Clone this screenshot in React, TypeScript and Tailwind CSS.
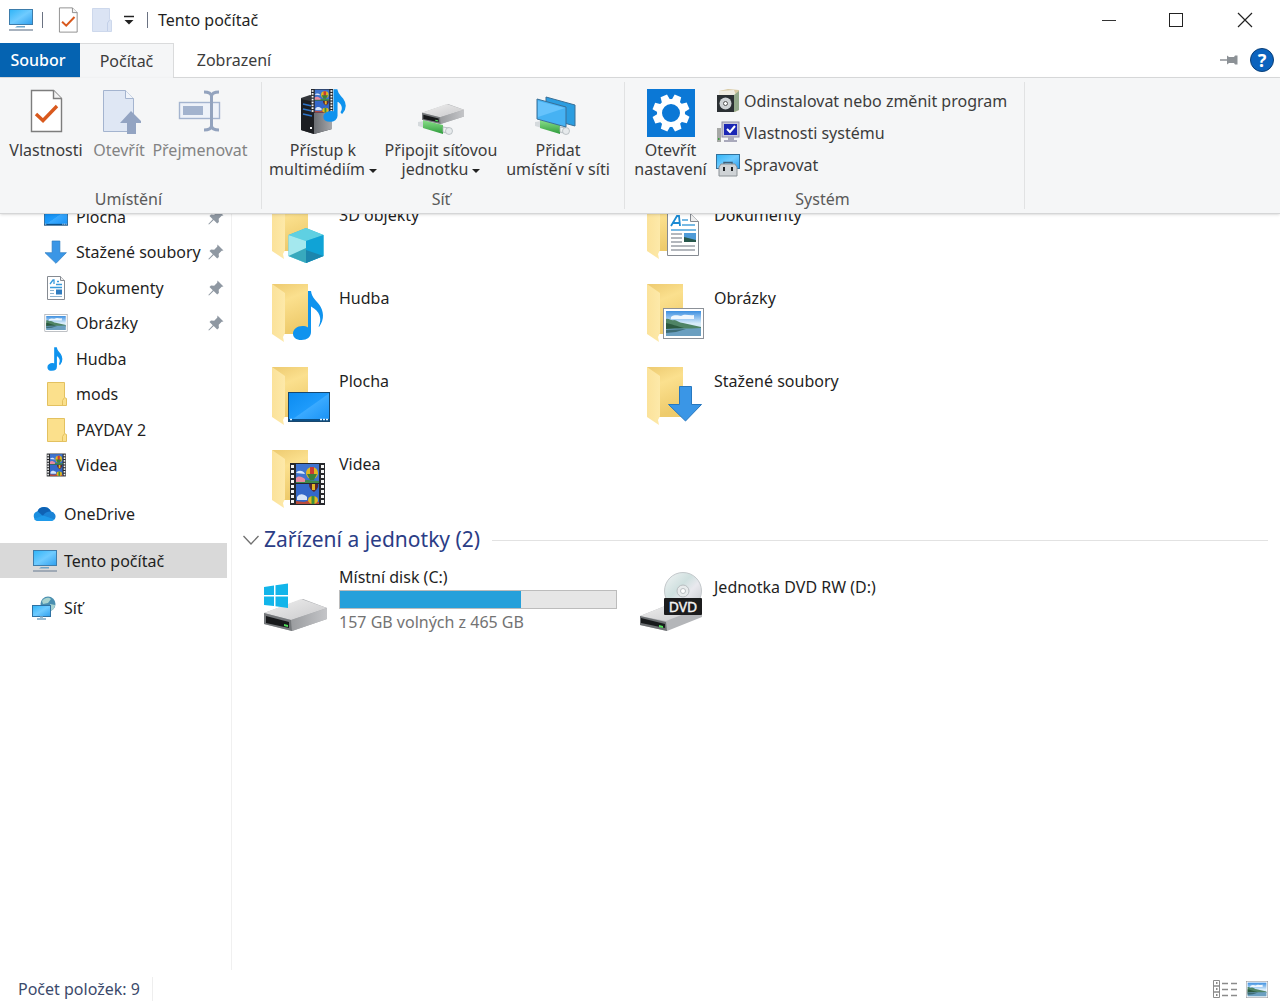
import type { ReactNode } from 'react';

type NavItem = {
  label: string;
  icon: ReactNode;
  pinned?: boolean;
};

type FolderItem = {
  label: string;
  overlay: ReactNode;
};

/* ---------- shared drawings ---------- */

function Gradients() {
  return (
    <svg className="absolute h-0 w-0" aria-hidden="true">
      <defs>
        <linearGradient id="screen" x1="0" y1="0" x2="1" y2="1">
          <stop offset="0" stopColor="#2fb4f7" />
          <stop offset="0.5" stopColor="#6fcbff" />
          <stop offset="1" stopColor="#2f9fee" />
        </linearGradient>
        <linearGradient id="desk" x1="0" y1="0" x2="1" y2="1">
          <stop offset="0" stopColor="#0b8bf0" />
          <stop offset="0.5" stopColor="#1e9bfb" />
          <stop offset="0.52" stopColor="#3aaaff" />
          <stop offset="1" stopColor="#1690f5" />
        </linearGradient>
        <linearGradient id="folderBack" x1="0" y1="0" x2="0.3" y2="1">
          <stop offset="0" stopColor="#edca70" />
          <stop offset="0.4" stopColor="#fbe08e" />
          <stop offset="1" stopColor="#eecb6c" />
        </linearGradient>
        <linearGradient id="folderFlap" x1="0" y1="0" x2="1" y2="0">
          <stop offset="0" stopColor="#fbe29a" />
          <stop offset="1" stopColor="#fde9a9" />
        </linearGradient>
        <linearGradient id="driveTop" x1="0" y1="0" x2="1" y2="1">
          <stop offset="0" stopColor="#efefef" />
          <stop offset="1" stopColor="#c9c9cb" />
        </linearGradient>
        <linearGradient id="driveSide" x1="0" y1="0" x2="1" y2="0">
          <stop offset="0" stopColor="#9a9c9f" />
          <stop offset="1" stopColor="#c4c5c8" />
        </linearGradient>
        <linearGradient id="sky" x1="0" y1="0" x2="0" y2="1">
          <stop offset="0" stopColor="#3d8fe0" />
          <stop offset="0.5" stopColor="#d8ecfa" />
          <stop offset="1" stopColor="#cfe3f0" />
        </linearGradient>
        <linearGradient id="disc" x1="0" y1="0" x2="1" y2="1">
          <stop offset="0" stopColor="#f3f4f5" />
          <stop offset="0.4" stopColor="#cfe0df" />
          <stop offset="0.6" stopColor="#e9e9ee" />
          <stop offset="1" stopColor="#c3c6ca" />
        </linearGradient>
        <linearGradient id="tower" x1="0" y1="0" x2="1" y2="0">
          <stop offset="0" stopColor="#6a6d72" />
          <stop offset="1" stopColor="#a5a7ab" />
        </linearGradient>
        <linearGradient id="cable" x1="0" y1="0" x2="0" y2="1">
          <stop offset="0" stopColor="#8be08b" />
          <stop offset="1" stopColor="#2f9c3c" />
        </linearGradient>
      </defs>
    </svg>
  );
}

function MonitorIcon() {
  return (
    <svg width="26" height="24" viewBox="0 0 26 24">
      <rect x="1.500" y="1.500" width="23" height="15" fill="url(#screen)" stroke="#3d7cab" />
      <path d="M9 18h8v1.500H7z" fill="#6fa4c8" />
      <path d="M1 22h24" stroke="#8b98a8" strokeWidth="1.500" />
    </svg>
  );
}

function PropertiesIcon({ size }: { size: number }) {
  return (
    <svg width={size} height={size} viewBox="0 0 44 44">
      <path d="M7.500 1.500h22l8 8v33h-30z" fill="#fff" stroke="#7d7d7d" strokeWidth="1.400" />
      <path d="M29.500 1.500v8h8" fill="#f3f3f3" stroke="#7d7d7d" strokeWidth="1.400" />
      <path d="M12 25l7 6.500L33 17" fill="none" stroke="#d9591d" strokeWidth="3.400" />
    </svg>
  );
}

function OpenIcon() {
  return (
    <svg width="44" height="46" viewBox="0 0 44 46">
      <path d="M6.500 1.500h22l8 8v33h-30z" fill="#dfe7f4" stroke="#a4b4cf" />
      <path d="M28.500 1.500v8h8" fill="#f0f4fa" stroke="#a4b4cf" />
      <path d="M34 22l12 12h-7v11h-9V34h-7z" fill="#93a4c2" />
    </svg>
  );
}

function RenameIcon() {
  return (
    <svg width="44" height="44" viewBox="0 0 44 44">
      <rect x="1.500" y="13.500" width="40" height="16" fill="#eef2f9" stroke="#a4b4cf" strokeWidth="1.400" />
      <rect x="5" y="17" width="20" height="9" fill="#a3b3ce" />
      <path
        d="M26 3c5 0 7 1 7.500 4C34 4 36 3 41 3M33.500 6v32M26 41c5 0 7-1 7.500-4 .5 3 2.500 4 7.500 4"
        fill="none"
        stroke="#93a3be"
        strokeWidth="3"
      />
    </svg>
  );
}

function NoteShape({ stroke = 0 }: { stroke?: number }) {
  return (
    <path
      d="M44 10h3c1 7 5 9 8.500 14 4 6 5.500 14-.5 22-.5-.5-.5-1 0-1.500 3-7 1-14-8-19V51c0 5-4 8-9.500 8S29 56.500 29 52.500 33 45 38.500 45c2 0 4 .4 5.500 1.500z"
      fill="#0f93ee"
      stroke="#0f93ee"
      strokeWidth={stroke}
    />
  );
}

function FilmShape() {
  const holes = [18, 23, 28, 33, 38, 43, 48, 53];
  return (
    <g>
      <rect x="26" y="16" width="35" height="42" fill="#26282c" />
      {holes.map((y) => (
        <g key={y} fill="#f4f4f4">
          <rect x="27" y={y} width="3" height="3" />
          <rect x="57" y={y} width="3" height="3" />
        </g>
      ))}
      <rect x="32" y="17" width="23" height="19" fill="#3f74cf" />
      <rect x="32" y="37" width="23" height="20" fill="#3468c9" />
      <path d="M32 36v-3l6 1 5-1 12 1v2z" fill="#3f8a4d" />
      <path d="M32 31c3-3 6-1 9 1v3h-9z" fill="#e88aa0" />
      <path d="M32 26c2-3 7-3 9 1z" fill="#d8e7fa" />
      <ellipse cx="48" cy="26" rx="6" ry="6" fill="#e2b81f" />
      <path d="M46 20h4v12h-4z" fill="#c93a35" />
      <path d="M43 27h10l-3 6h-4z" fill="#3b7f3b" />
      <path d="M45 37h9c1 4-2 6-4 8-3-2-5-4-5-8z" fill="#5d2830" />
      <path d="M48 37h3v6h-3z" fill="#e4b724" />
      <path d="M33 50c3-4 7-3 10 0v3H33z" fill="#d5e4f8" />
      <path d="M32 57v-3l8 1 6-2 9 2v2z" fill="#b84b3b" />
      <ellipse cx="49" cy="53" rx="5" ry="4" fill="#e2b81f" />
      <path d="M47.500 49h3v8h-3z" fill="#3b8f3b" />
    </g>
  );
}

function PictureShape() {
  return (
    <g>
      <rect x="24.500" y="27.500" width="40" height="30" fill="#fff" stroke="#8c9198" />
      <rect x="27" y="30" width="35" height="25" fill="url(#sky)" />
      <path d="M32 36c4-3 8-1 10-1 4-3 8 0 13-1v4H32z" fill="#f0f7fd" />
      <path d="M27 38c3-1 5 2 8 1 3 0 5 3 9 3l18 4v3H27z" fill="#4f8465" />
      <path d="M27 42c6 1 10 3 18 5l-18 3z" fill="#2c5a40" />
      <path d="M27 48c12-1 22 0 35-1v8H27z" fill="#6b9fc0" />
      <path d="M27 49l20-1-10 3-10 1z" fill="#3d6c76" />
    </g>
  );
}

function DocumentShape() {
  return (
    <g>
      <path d="M28.500 15.500h23l8 8v34h-31z" fill="#fff" stroke="#868b92" />
      <path d="M51.500 15.500v8h8" fill="#eee" stroke="#868b92" />
      <path d="M32 28l6-10h2l1 10M34 25h7" fill="none" stroke="#1b8ad3" strokeWidth="1.800" />
      <path d="M43 22h6M43 27h13M32 32h25" stroke="#4aa3dc" strokeWidth="1.400" />
      <path d="M32 36h11M32 40h11M32 44h11M32 48h24M32 52h24" stroke="#9aa0a8" strokeWidth="1.300" />
      <rect x="45" y="35" width="12" height="9" fill="#4e9bd8" />
      <path d="M45 39l12 3v2H45z" fill="#28584c" />
    </g>
  );
}

function SmallDocumentIcon() {
  return (
    <svg width="24" height="24" viewBox="0 0 24 24">
      <path d="M3.500 .5h13l4 4v19h-17z" fill="#fff" stroke="#868b92" />
      <path d="M16.500 .5v4h4" fill="#eee" stroke="#868b92" />
      <path d="M6 8l3-4h1v4M13 5.500h2M12 8.500h6M6 11.500h12" fill="none" stroke="#3a9bdc" strokeWidth="1.300" />
      <path d="M6 14.500h4M6 17.500h4M6 20.500h12" stroke="#8fb4cf" />
      <rect x="12" y="13.500" width="6" height="5" fill="#2f7cc0" />
    </svg>
  );
}

function DesktopShape() {
  return (
    <g>
      <rect x="24.500" y="28.500" width="41" height="29" fill="url(#desk)" stroke="#17476e" />
      <path d="M25 56h40" stroke="#0b4f86" strokeWidth="2" />
      <path d="M26 55.500h2M56 55.500h2M59 55.500h2M62 55.500h2" stroke="#e8f5ff" strokeWidth="1.500" />
    </g>
  );
}

function DownloadShape() {
  return <path d="M40.500 22.500h12v18h10L46.500 57 29.500 40.500h11z" fill="#3a96e6" stroke="#2778c0" />;
}

function CubeShape() {
  return (
    <g>
      <path d="M42 30l17.500 7v21L42 65l-17.500-7V37z" fill="#37bfd9" />
      <path d="M42 30l17.500 7L42 43l-17.500-6z" fill="#5fd0e2" />
      <path d="M24.500 37L42 43v22l-17.500-7z" fill="#a4e8ee" />
      <path d="M24.500 58L42 50v15z" fill="#38a9bd" />
      <path d="M42 43l17.500-6v21L42 65z" fill="#10a3d6" />
      <path d="M42 65V52l17.500 6z" fill="#1c86ad" />
    </g>
  );
}

function FolderIcon({ children }: { children: ReactNode }) {
  return (
    <svg className="shrink-0 overflow-visible" width="64" height="64" viewBox="0 0 64 64">
      <path d="M8 3h36v50H18z" fill="url(#folderBack)" />
      <path d="M8 3l13 9v40l-2 4 1 5-12-8z" fill="url(#folderFlap)" />
      <path d="M21 53h5v7l-5-2z" fill="#fff" />
      {children}
    </svg>
  );
}

// Small icon cropped from the large overlay drawing
function Mini({ box, children }: { box: string; children: ReactNode }) {
  return (
    <svg width="24" height="24" viewBox={box}>
      {children}
    </svg>
  );
}

function SmallFolderIcon() {
  return (
    <svg width="24" height="24" viewBox="0 0 24 24">
      <path d="M3.500 .5h17v15l2 1v7h-19z" fill="#fbe08c" stroke="#e3c160" />
      <path d="M18.500 23.500v-5l2-3" fill="none" stroke="#e3c160" />
    </svg>
  );
}

function OneDriveIcon() {
  return (
    <svg width="24" height="24" viewBox="0 0 24 24">
      <path d="M6 19a5 5 0 0 1-.5-9.800A7.500 7.500 0 0 1 19 9.500a5 5 0 0 1 .5 9.500z" fill="#1a8fe0" />
      <path d="M5.500 9.200A7.500 7.500 0 0 1 19 9.500L11 14z" fill="#0f62b4" />
      <path d="M19 9.500a5 5 0 0 1 3.500 8L11 13.500c2-3 5-4.500 8-4z" fill="#1b83d6" />
      <path d="M2 17l9-3.500L22.500 17.500A5 5 0 0 1 19.500 19H6a5 5 0 0 1-4-2z" fill="#1f9aea" />
    </svg>
  );
}

function NetworkIcon() {
  return (
    <svg width="24" height="24" viewBox="0 0 24 24">
      <circle cx="16" cy="8" r="7.500" fill="#4a8fb0" />
      <path d="M10 5c3-4 7-4 9-2l-3 4-5 1zM18 8l5 1c0 3-2 5-4 6z" fill="#a9d3cf" />
      <rect x=".5" y="9.500" width="18" height="11" fill="url(#screen)" stroke="#2f72a3" />
      <path d="M5 23h9M8 21h3" stroke="#7aa6c4" strokeWidth="1.500" />
    </svg>
  );
}

function PinIcon() {
  return (
    <svg className="shrink-0" width="16" height="16" viewBox="0 0 16 16">
      <path d="M9.500 .5l6 6-1.800.3-3 3 .2 3.200-1.700 1.500-3.500-3.500L1 15.500.3 15l4.500-4.800L1.500 7l1.500-1.500 3.200.2 3-3z" fill="#8f98a2" />
    </svg>
  );
}

function DriveShape() {
  return (
    <g>
      <path d="M0 45L39 31l24 9v11L28 63 0 56z" fill="#a9abae" />
      <path d="M0 45L37 31l26 9-36 12z" fill="url(#driveTop)" />
      <path d="M27 52l36-12v11L28 63z" fill="url(#driveSide)" />
      <path d="M0 45l27 7 1 11-28-7z" fill="#75787b" />
      <path d="M2 48l23 6v6L2 55z" fill="#17191b" />
      <path d="M20 56l4 1v2l-4-1z" fill="#4fe05a" />
    </g>
  );
}

function LocalDiskIcon() {
  return (
    <svg className="shrink-0 overflow-visible" width="64" height="64" viewBox="0 0 64 64">
      <DriveShape />
      <path d="M0 19l10-1.500V27H0zM11.500 17.300L24 15.500V27H11.500zM0 28.500h10V38L0 37zM11.500 28.500H24V40l-12.500-1.800z" fill="#12b5ea" />
    </svg>
  );
}

function DvdIcon() {
  return (
    <svg className="shrink-0 overflow-visible" width="64" height="64" viewBox="0 0 64 64">
      <path d="M1 48l30-12 32 6v7L28 63 1 57z" fill="#b4b6b9" />
      <path d="M1 48l30-12 32 3-36 14z" fill="url(#driveTop)" />
      <path d="M1 48l26 6 1 9-27-6z" fill="#6c6f72" />
      <path d="M2 50l24 6v4L2 55z" fill="#17191b" />
      <path d="M20 57l4 1v2l-4-1z" fill="#4fe05a" />
      <circle cx="44" cy="23" r="18.500" fill="url(#disc)" stroke="#c3c8cb" />
      <circle cx="44" cy="23" r="6" fill="#e8ebec" stroke="#b8bdc0" />
      <circle cx="44" cy="23" r="2.500" fill="#fff" stroke="#b8bdc0" />
      <rect x="25" y="30" width="38" height="17" rx="1" fill="#1c1c1d" />
      <text x="44" y="44" textAnchor="middle" fontSize="14" fill="#f4f4f4" stroke="#f4f4f4" strokeWidth=".4">
        DVD
      </text>
    </svg>
  );
}

function MediaIcon() {
  return (
    <svg width="46" height="46" viewBox="0 0 46 46">
      <path d="M1 9l9-3 22 5v29l-18 5-13-4z" fill="#33363b" />
      <path d="M14 13l18-4v31l-18 5z" fill="url(#tower)" />
      <path d="M1 10l13 3v32L1 41z" fill="#1c1e22" />
      <path d="M3 15l9 2M3 20l9 2M3 25l9 2" stroke="#2f74c8" strokeWidth="1.500" />
      <path d="M10 38h2v2h-2z" fill="#fff" />
      <svg x="11" y="0" width="22" height="24" viewBox="26 16 35 42" preserveAspectRatio="none">
        <FilmShape />
      </svg>
      <svg x="23" y="0" width="23" height="33" viewBox="27 8 34 53" preserveAspectRatio="none">
        <NoteShape stroke={3} />
      </svg>
    </svg>
  );
}

function Cable() {
  return (
    <g>
      <path d="M0 33l6-1 28 8-1 5-8-1L0 37z" fill="#d5dadd" />
      <path d="M5 31l20 5v9L5 39z" fill="url(#cable)" />
      <path d="M25 38l6 1v5l-6-1z" fill="#eef1f2" stroke="#aab2b6" strokeWidth=".7" />
      <circle cx="31" cy="42" r="3.500" fill="#e6eaec" stroke="#aab2b6" strokeWidth=".7" />
    </g>
  );
}

function MapDriveIcon() {
  return (
    <svg width="46" height="46" viewBox="0 0 46 46">
      <Cable />
      <svg x="4" y="15" width="42" height="20" viewBox="0 31 63 32" preserveAspectRatio="none">
        <DriveShape />
      </svg>
    </svg>
  );
}

function AddPlaceIcon() {
  return (
    <svg width="46" height="46" viewBox="0 0 46 46">
      <path d="M11 8l29 8v21l-29-8z" fill="#2b9de0" stroke="#3a6f96" />
      <Cable />
      <path d="M2 10l29 8v20L2 30z" fill="#46b2f3" stroke="#3a6f96" />
      <path d="M3 12l27 7-27 9z" fill="#66c3fc" />
    </svg>
  );
}

function SettingsIcon() {
  const teeth = [22, 67, 112, 157, 202, 247, 292, 337];
  return (
    <svg width="48" height="48" viewBox="0 0 48 48">
      <rect width="48" height="48" fill="#0b78d6" />
      {teeth.map((angle) => (
        <path key={angle} d="M20.500 5.500h7l1 7h-9z" fill="#fff" transform={`rotate(${angle} 24 24)`} />
      ))}
      <circle cx="24" cy="24" r="11.500" fill="none" stroke="#fff" strokeWidth="5" />
    </svg>
  );
}

function UninstallIcon() {
  return (
    <svg width="24" height="24" viewBox="0 0 24 24">
      <path d="M3 2l9-2 11 1v20l-4 2H3z" fill="#d8c9a2" />
      <path d="M3 2l15-1 2 5H3z" fill="#eeebe0" />
      <path d="M18 6l5-4v19l-5 2z" fill="#93a98b" />
      <rect x="1" y="6" width="17" height="17" fill="#2b3033" />
      <circle cx="9.500" cy="14.500" r="6" fill="#cfd3d5" />
      <circle cx="9.500" cy="14.500" r="2" fill="#fff" stroke="#555" />
    </svg>
  );
}

function SystemIcon() {
  return (
    <svg width="24" height="24" viewBox="0 0 24 24">
      <rect x="1" y="7" width="4" height="14" fill="#a6a8a6" />
      <path d="M2 18h1.500" stroke="#3f9c42" strokeWidth="2" />
      <rect x="6" y="1" width="17" height="15" fill="#c9c8d8" stroke="#8c8ca4" />
      <rect x="8" y="3" width="13" height="11" fill="#1a26b5" />
      <path d="M11 8l3 3 5-6" fill="none" stroke="#fff" strokeWidth="2" />
      <path d="M12 16h6v3h3v2H8v-2h4z" fill="#a9a9bb" />
    </svg>
  );
}

function ManageIcon() {
  return (
    <svg width="24" height="24" viewBox="0 0 24 24">
      <rect x=".5" y="1.500" width="23" height="14" fill="url(#screen)" stroke="#33719c" />
      <path d="M8 12V9.500h8V12" fill="none" stroke="#3d5f7a" strokeWidth="1.500" />
      <path d="M3 14l2-3h14l2 3v9H3z" fill="#cfd3d6" stroke="#8b9196" />
      <path d="M7 14h2v4H7zM15 14h2v4h-2z" fill="#202326" />
    </svg>
  );
}

function Caret() {
  return (
    <svg className="ml-1 inline-block align-middle" width="8" height="4" viewBox="0 0 8 4">
      <path d="M0 0h8L4 4z" fill="#222" />
    </svg>
  );
}

/* ---------- data ---------- */

const quickAccess: NavItem[] = [
  { label: 'Plocha', icon: <Mini box="24 22 42 42"><DesktopShape /></Mini>, pinned: true },
  { label: 'Stažené soubory', icon: <Mini box="28 21 37 37"><DownloadShape /></Mini>, pinned: true },
  { label: 'Dokumenty', icon: <SmallDocumentIcon />, pinned: true },
  { label: 'Obrázky', icon: <Mini box="23 21 43 43"><PictureShape /></Mini>, pinned: true },
  { label: 'Hudba', icon: <Mini box="20 8 53 53"><NoteShape stroke={3} /></Mini> },
  { label: 'mods', icon: <SmallFolderIcon /> },
  { label: 'PAYDAY 2', icon: <SmallFolderIcon /> },
  { label: 'Videa', icon: <Mini box="21 15 44 44"><FilmShape /></Mini> },
];

const places: NavItem[] = [
  { label: 'OneDrive', icon: <OneDriveIcon /> },
  { label: 'Tento počítač', icon: <MonitorIcon /> },
  { label: 'Síť', icon: <NetworkIcon /> },
];

const folders: FolderItem[] = [
  { label: '3D objekty', overlay: <CubeShape /> },
  { label: 'Dokumenty', overlay: <DocumentShape /> },
  { label: 'Hudba', overlay: <NoteShape /> },
  { label: 'Obrázky', overlay: <PictureShape /> },
  { label: 'Plocha', overlay: <DesktopShape /> },
  { label: 'Stažené soubory', overlay: <DownloadShape /> },
  { label: 'Videa', overlay: <FilmShape /> },
];

const disk = { total: 465, free: 157, used: 65.6 };

/* ---------- page parts ---------- */

function TitleBar() {
  return (
    <header className="flex h-[43px] items-center justify-between pb-1">
      <div className="flex items-center pl-2">
        <MonitorIcon />
        <span className="ml-2 h-4 w-px bg-gray-500" />
        <button className="ml-3" aria-label="Vlastnosti">
          <PropertiesIcon size={26} />
        </button>
        <button className="ml-2.5" aria-label="Nová složka">
          <svg width="22" height="24" viewBox="0 0 22 24">
            <path d="M1.500 .5h17v11l2 1v11h-19z" fill="#dbe4f4" stroke="#cdd8ec" />
            <path d="M16.500 23v-8l2-3" fill="none" stroke="#c3d0e8" />
          </svg>
        </button>
        <button className="ml-2.5" aria-label="Přizpůsobit panel">
          <svg width="12" height="10" viewBox="0 0 12 10">
            <path d="M1 1.500h10" stroke="#222" strokeWidth="1.500" />
            <path d="M1.500 5h9L6 9.500z" fill="#222" />
          </svg>
        </button>
        <span className="ml-3 h-4 w-px bg-gray-500" />
        <h1 className="ml-2.5">Tento počítač</h1>
      </div>
      <div className="flex">
        <button className="flex h-10 w-[67px] items-center justify-center" aria-label="Minimalizovat">
          <svg width="16" height="16" viewBox="0 0 16 16">
            <path d="M1 8.500h14" stroke="#333" />
          </svg>
        </button>
        <button className="flex h-10 w-[67px] items-center justify-center" aria-label="Maximalizovat">
          <svg width="16" height="16" viewBox="0 0 16 16">
            <rect x="1.500" y="1.500" width="13" height="13" fill="none" stroke="#222" />
          </svg>
        </button>
        <button className="flex h-10 w-[71px] items-center justify-center" aria-label="Zavřít">
          <svg width="16" height="16" viewBox="0 0 16 16">
            <path d="M1 1l14 14M15 1L1 15" stroke="#222" strokeWidth="1.200" />
          </svg>
        </button>
      </div>
    </header>
  );
}

function Tabs() {
  return (
    <div className="flex h-[35px] items-stretch border-b border-[#dadbdc] text-[#3c3c3c]">
      <button className="w-20 bg-[#0563b1] pr-1 font-medium text-white">Soubor</button>
      <button className="-mb-px w-[94px] border-t border-r border-[#dadbdc] bg-[#f5f6f7]">Počítač</button>
      <button className="w-[120px]">Zobrazení</button>
      <div className="ml-auto flex items-center gap-3 pr-1.5">
        <button aria-label="Připnout pás karet">
          <svg width="18" height="12" viewBox="0 0 18 12">
            <path d="M0 6h7" stroke="#8c9196" strokeWidth="1.500" />
            <path d="M7 1.500l2 1.500h5l1-1.500h2.500v9H15L14 9H9l-2 1.500z" fill="#8c9196" />
          </svg>
        </button>
        <button
          className="flex size-6 items-center justify-center rounded-full border border-[#0a3f77] bg-[#0b63be] text-lg leading-none font-bold text-white"
          aria-label="Nápověda"
        >
          ?
        </button>
      </div>
    </div>
  );
}

function RibbonGroup({ label, className, children }: { label: string; className: string; children: ReactNode }) {
  return (
    <section className={`flex shrink-0 flex-col justify-between border-r border-[#e1e2e3] ${className}`}>
      <div className="flex items-start gap-2 px-2">{children}</div>
      <h2 className="pr-1 text-center leading-[19px] text-[#5a5a5a]">{label}</h2>
    </section>
  );
}

function RibbonButton({ icon, className, children }: { icon: ReactNode; className: string; children: ReactNode }) {
  return (
    <button className={`flex flex-col items-center pt-1 leading-[19px] whitespace-nowrap ${className}`}>
      <span className="flex h-[55px] items-start justify-center pt-[3px]">{icon}</span>
      <span>{children}</span>
    </button>
  );
}

function Ribbon() {
  return (
    <div className="relative z-10 flex h-[136px] border-b border-[#d5d6d7] bg-[#f5f6f7] py-1 text-[#3c3c3c] shadow-sm">
      <RibbonGroup label="Umístění" className="w-[262px]">
        <RibbonButton icon={<PropertiesIcon size={44} />} className="w-[76px]">
          Vlastnosti
        </RibbonButton>
        <RibbonButton icon={<OpenIcon />} className="w-[54px] text-[#838383]">
          Otevřít
        </RibbonButton>
        <RibbonButton icon={<RenameIcon />} className="w-[92px] text-[#838383]">
          Přejmenovat
        </RibbonButton>
      </RibbonGroup>
      <RibbonGroup label="Síť" className="w-[363px]">
        <RibbonButton icon={<MediaIcon />} className="w-[106px]">
          Přístup k<br />
          multimédiím
          <Caret />
        </RibbonButton>
        <RibbonButton icon={<MapDriveIcon />} className="w-[114px]">
          Připojit síťovou
          <br />
          jednotku
          <Caret />
        </RibbonButton>
        <RibbonButton icon={<AddPlaceIcon />} className="w-[104px]">
          Přidat
          <br />
          umístění v síti
        </RibbonButton>
      </RibbonGroup>
      <RibbonGroup label="Systém" className="w-[400px]">
        <RibbonButton icon={<SettingsIcon />} className="w-[75px]">
          Otevřít
          <br />
          nastavení
        </RibbonButton>
        <div className="flex flex-col items-start gap-2 pt-[7px] whitespace-nowrap">
          <button className="flex items-center gap-1 leading-6">
            <UninstallIcon />
            Odinstalovat nebo změnit program
          </button>
          <button className="flex items-center gap-1 leading-6">
            <SystemIcon />
            Vlastnosti systému
          </button>
          <button className="flex items-center gap-1 leading-6">
            <ManageIcon />
            Spravovat
          </button>
        </div>
      </RibbonGroup>
    </div>
  );
}

function Sidebar() {
  return (
    <nav className="w-[232px] shrink-0 overflow-hidden border-r border-[#f0f0f0]">
      {/* list is scrolled a little way under the ribbon */}
      <ul className="-mt-[15px] grid h-[284px] auto-rows-fr">
        {quickAccess.map((item) => (
          <li key={item.label}>
            <a href="#" className="flex h-full items-center gap-2 pr-2 pl-11 whitespace-nowrap">
              {item.icon}
              <span className="w-[124px]">{item.label}</span>
              {item.pinned && <PinIcon />}
            </a>
          </li>
        ))}
      </ul>
      <ul className="mt-[13px] flex flex-col gap-3">
        {places.map((item) => (
          <li key={item.label} className="pr-1">
            <a
              href="#"
              className={`flex h-[35px] items-center pl-8 ${item.label === 'Tento počítač' ? 'bg-[#d9d9d9]' : ''}`}
            >
              <span className="flex w-8">{item.icon}</span>
              {item.label}
            </a>
          </li>
        ))}
      </ul>
    </nav>
  );
}

function Content() {
  return (
    <main className="min-w-0 flex-1 overflow-hidden pr-3 pl-2">
      <ul className="-mt-4 grid grid-cols-[repeat(auto-fill,375px)] pl-6">
        {folders.map((folder) => (
          <li key={folder.label} className="h-[83px]">
            <a href="#" className="flex gap-[11px]">
              <FolderIcon>{folder.overlay}</FolderIcon>
              <span className="pt-1.5 leading-[22px]">{folder.label}</span>
            </a>
          </li>
        ))}
      </ul>
      <button className="-mt-1.5 flex h-8 w-full items-center">
        <svg className="mr-1 ml-0.5" width="18" height="12" viewBox="0 0 18 12">
          <path d="M1.500 2l7.500 8 7.500-8" fill="none" stroke="#707070" strokeWidth="1.300" />
        </svg>
        <span className="text-[21px] text-[#2b3d86]">Zařízení a jednotky (2)</span>
        <span className="ml-3 h-px flex-1 bg-[#e2e2e2]" />
      </button>
      <ul className="mt-3 grid grid-cols-[repeat(auto-fill,375px)] pl-6">
        <li>
          <a href="#" className="flex gap-[11px]">
            <LocalDiskIcon />
            <span className="w-[278px]">
              <span className="block leading-[18px]">Místní disk (C:)</span>
              <span
                className="my-1 block h-[19px] border border-[#bcbcbc] bg-[#e6e6e6]"
                role="progressbar"
                aria-valuenow={disk.used}
                aria-label="Využité místo"
              >
                <span className="block h-full bg-[#26a0da]" style={{ width: `${disk.used}%` }} />
              </span>
              <span className="block leading-[18px] text-[#737373]">
                {disk.free} GB volných z {disk.total} GB
              </span>
            </span>
          </a>
        </li>
        <li>
          <a href="#" className="flex gap-[11px]">
            <DvdIcon />
            <span className="pt-2 leading-[22px]">Jednotka DVD RW (D:)</span>
          </a>
        </li>
      </ul>
    </main>
  );
}

function StatusBar() {
  return (
    <footer className="flex h-[34px] items-center justify-between pt-1 pr-3 pl-[18px] text-[#3b4a6b]">
      <span className="border-r border-[#eeeeee] pr-3">Počet položek: 9</span>
      <div className="flex items-center gap-2">
        <button aria-label="Podrobnosti">
          <svg width="26" height="20" viewBox="0 0 26 20">
            <path d="M1.500 1.500h6v5.500h-6zM1.500 7h6v6h-6zM1.500 13h6v5.500h-6z" fill="#fff" stroke="#8b8b8b" />
            <path d="M4 4h1.500M4 10h1.500M4 16h1.500" stroke="#666" strokeWidth="1.500" />
            <path d="M10 4.500h6M19 4.500h6M10 10.500h6M19 10.500h6M10 16.500h6M19 16.500h6" stroke="#8b8b8b" strokeWidth="1.500" />
          </svg>
        </button>
        <button aria-label="Velké ikony">
          <svg width="22" height="17" viewBox="24 27 41 31" preserveAspectRatio="none">
            <PictureShape />
          </svg>
        </button>
      </div>
    </footer>
  );
}

export default function App() {
  return (
    <div className="flex h-screen flex-col overflow-hidden bg-white font-['Noto_Sans','Open_Sans',sans-serif] text-base text-[#1f1f1f]">
      <Gradients />
      <TitleBar />
      <Tabs />
      <Ribbon />
      <div className="flex min-h-0 flex-1">
        <Sidebar />
        <Content />
      </div>
      <StatusBar />
    </div>
  );
}
